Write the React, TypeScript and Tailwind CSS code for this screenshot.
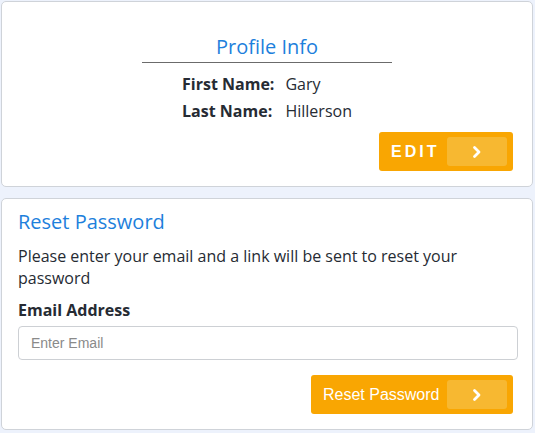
import React from "react";

function Chevron() {
  return (
    <svg width="12" height="14" viewBox="0 0 12 14" fill="none">
      <path d="M3.5 2.5 L8 7 L3.5 11.5" stroke="white" strokeWidth="2.8" strokeLinecap="round" strokeLinejoin="round" />
    </svg>
  );
}

export default function App() {
  return (
    <div className="min-h-[433px] w-[535px] bg-[#edf2fc] pt-px px-px pb-px font-['Open_Sans',sans-serif] text-[#262b33]">
      <div className="w-[532px] h-[186px] bg-white border border-[#cfd3d9] rounded-[5px] flex flex-col items-center pt-[31px]">
        <div className="w-[250px] border-b border-[#6b6b6b] text-center text-[20px] leading-[28px] text-[#1d80dc] pb-[1px]">
          Profile Info
        </div>
        <div className="mt-[8px] grid grid-cols-[auto_auto] gap-x-[11px] text-[16px] leading-[27px]">
          <div className="font-bold">First Name:</div>
          <div>Gary</div>
          <div className="font-bold">Last Name:</div>
          <div>Hillerson</div>
        </div>
        <div className="self-end mr-[19px] mt-[7px]">
          <button className="w-[134px] h-[39px] bg-[#f9a602] rounded-[3px] flex items-center pl-[12px] pr-[6px]">
            <span className="text-white font-bold text-[16px] tracking-[3px] font-['Liberation_Sans',sans-serif]">EDIT</span>
            <span className="ml-auto w-[60px] h-[29px] bg-[#f7b831] rounded-[3px] flex items-center justify-center">
              <Chevron />
            </span>
          </button>
        </div>
      </div>
      <div className="mt-[11px] w-[532px] h-[232px] bg-white border border-[#cfd3d9] rounded-[5px] px-[16px] pt-[9px]">
        <div className="text-[20px] leading-[28px] text-[#1d80dc]">Reset Password</div>
        <p className="mt-[9px] text-[16px] leading-[22px] pr-[40px]">
          Please enter your email and a link will be sent to reset your password
        </p>
        <div className="mt-[10px] font-bold text-[16px] leading-[22px]">Email Address</div>
        <input
          className="mt-[5px] w-[500px] h-[34px] border border-[#cdd0d4] rounded-[4px] px-[12px] text-[14px] font-['Liberation_Sans',sans-serif] placeholder:text-[#8a8a8a] outline-none"
          placeholder="Enter Email"
        />
        <div className="flex justify-end mt-[15px] pr-[3px]">
          <button className="w-[202px] h-[39px] bg-[#f9a602] rounded-[3px] flex items-center pl-[12px] pr-[6px]">
            <span className="text-white text-[16px] font-['Liberation_Sans',sans-serif]">Reset Password</span>
            <span className="ml-auto w-[60px] h-[29px] bg-[#f7b831] rounded-[3px] flex items-center justify-center">
              <Chevron />
            </span>
          </button>
        </div>
      </div>
    </div>
  );
}
